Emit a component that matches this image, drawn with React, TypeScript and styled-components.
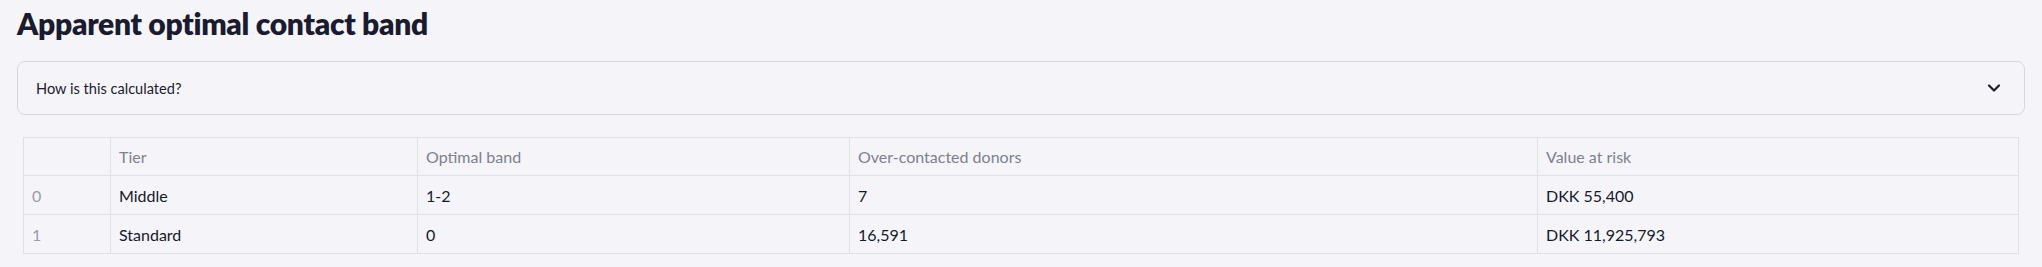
import styled, { createGlobalStyle } from 'styled-components';

const GlobalStyle = createGlobalStyle`
  html, body {
    margin: 0;
    padding: 0;
    background: #f5f5f9;
  }
  body {
    font-family: Lato, "Noto Sans", sans-serif;
    color: #1c1d31;
  }
`;

const Page = styled.main`
  padding: 5px 17px 14px;
  box-sizing: border-box;
  width: 2042px;
  min-height: 267px;
`;

const Title = styled.h2`
  margin: 0;
  font-size: 30px;
  line-height: 1.2;
  font-weight: 800;
  color: #1a1b2e;
  letter-spacing: -0.3px;
`;

const Expander = styled.details`
  margin-top: 20px;
  border: 1px solid #d6d6de;
  border-radius: 8px;
  background: #f5f5f9;
`;

const Summary = styled.summary`
  list-style: none;
  display: flex;
  align-items: center;
  justify-content: space-between;
  height: 52px;
  padding: 0 20px 0 18px;
  font-size: 14.6px;
  color: #1a1b2e;
  cursor: pointer;

  &::-webkit-details-marker {
    display: none;
  }
`;

const Chevron = styled.svg`
  width: 20px;
  height: 20px;
  color: #1c1d31;
`;

const TableWrap = styled.div`
  margin: 22px 7px 0 6px;
`;

const Grid = styled.table`
  width: 100%;
  table-layout: fixed;
  border-collapse: collapse;
  border: 1px solid #e0e0e7;
  font-size: 16px;
`;

const HeadCell = styled.th`
  height: 37px;
  padding: 0 8px;
  text-align: left;
  font-weight: 400;
  color: #7e808d;
  border: 1px solid #e0e0e7;
  white-space: nowrap;
`;

const Cell = styled.td<{ $index?: boolean }>`
  height: 38px;
  padding: 0 8px;
  color: ${(p) => (p.$index ? '#9a9ba6' : '#17182b')};
  border: 1px solid #e0e0e7;
  white-space: nowrap;
`;

const columns = [
  { label: '', width: 87 },
  { label: 'Tier', width: 307 },
  { label: 'Optimal band', width: 432 },
  { label: 'Over-contacted donors', width: 688 },
  { label: 'Value at risk', width: 481 },
];

const rows = [
  ['0', 'Middle', '1-2', '7', 'DKK 55,400'],
  ['1', 'Standard', '0', '16,591', 'DKK 11,925,793'],
];

export default function App() {
  return (
    <>
      <GlobalStyle />
      <Page>
        <Title>Apparent optimal contact band</Title>
        <Expander>
          <Summary>
            <span>How is this calculated?</span>
            <Chevron viewBox="0 0 24 24" fill="none" stroke="currentColor" strokeWidth={2.6} strokeLinecap="round" strokeLinejoin="round">
              <path d="M6 9l6 6 6-6" />
            </Chevron>
          </Summary>
        </Expander>
        <TableWrap>
          <Grid>
            <colgroup>
              {columns.map((c, i) => (
                <col key={i} style={{ width: c.width }} />
              ))}
            </colgroup>
            <thead>
              <tr>
                {columns.map((c, i) => (
                  <HeadCell key={i}>{c.label}</HeadCell>
                ))}
              </tr>
            </thead>
            <tbody>
              {rows.map((r) => (
                <tr key={r[0]}>
                  {r.map((v, i) => (
                    <Cell key={i} $index={i === 0}>
                      {v}
                    </Cell>
                  ))}
                </tr>
              ))}
            </tbody>
          </Grid>
        </TableWrap>
      </Page>
    </>
  );
}
